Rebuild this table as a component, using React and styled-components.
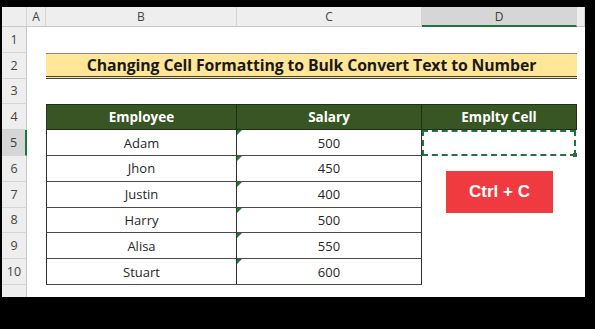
import React from 'react';
import styled, { createGlobalStyle, css } from 'styled-components';

const GlobalStyle = createGlobalStyle`
  html, body {
    margin: 0;
    padding: 0;
    background: #000;
  }
  body {
    font-family: 'Open Sans', 'Liberation Sans', sans-serif;
  }
`;

const Frame = styled.div`
  width: 595px;
  height: 329px;
  background: #000;
  padding: 7px 0 0 2px;
  box-sizing: border-box;
`;

const Sheet = styled.div`
  position: relative;
  width: 583px;
  height: 290px;
  overflow: hidden;
  background: #fff;
  display: grid;
  grid-template-columns: 25px 19px 191px 185px 155px 1fr;
  grid-template-rows: 20px repeat(11, 25.8px);
`;

const ColHead = styled.div`
  display: flex;
  align-items: center;
  justify-content: center;
  box-sizing: border-box;
  background: #eeeeee;
  border-right: 1px solid #d4d4d4;
  border-bottom: 1px solid #c8c8c8;
  font-size: 12px;
  color: #444;
  ${p => p.selected && css`
    background: #d6d6d6;
    border-bottom: 2px solid #217346;
    color: #3a3a3a;
  `}
`;

const RowHead = styled.div`
  display: flex;
  align-items: center;
  justify-content: center;
  box-sizing: border-box;
  background: #eeeeee;
  border-right: 1px solid #c8c8c8;
  border-bottom: 1px solid #d4d4d4;
  font-size: 12.5px;
  color: #444;
  ${p => p.selected && css`
    background: #d6d6d6;
    border-right: 2px solid #217346;
    color: #3a3a3a;
  `}
`;

const Blank = styled.div`
  background: #fff;
`;

const Title = styled.div`
  grid-column: 3 / 6;
  display: flex;
  align-items: center;
  justify-content: center;
  box-sizing: border-box;
  background: #ffe699;
  border-top: 1px solid #8a8a8a;
  border-bottom: 3px double #3f3f3f;
  font-weight: 700;
  font-size: 15.8px;
  color: #1a1a1a;
  letter-spacing: -0.1px;
`;

const Cell = styled.div`
  position: relative;
  display: flex;
  align-items: center;
  justify-content: center;
  box-sizing: border-box;
  font-size: 13px;
  color: #262626;
  border-right: 1px solid #2e2e2e;
  border-bottom: 1px solid #4a4a4a;
  ${p => p.first && css`border-left: 1px solid #2e2e2e;`}
  ${p => p.head && css`
    background: #375623;
    color: #fff;
    font-weight: 700;
    font-size: 13.5px;
    border-top: 1px solid #1f2f14;
    border-bottom-color: #1f2f14;
    border-right-color: #1f2f14;
  `}
  ${p => p.textNum && css`
    &::before {
      content: '';
      position: absolute;
      left: 0;
      top: 0;
      width: 0;
      height: 0;
      border-top: 5px solid #1e7b34;
      border-right: 5px solid transparent;
    }
  `}
`;

const Copied = styled.div`
  box-sizing: border-box;
  position: relative;
  border: 2px dashed #217346;
  margin: 0 1px 0 0;
  &::after {
    content: '';
    position: absolute;
    right: -3px;
    bottom: -3px;
    width: 4px;
    height: 4px;
    background: #217346;
  }
`;

const KeyBadge = styled.div`
  position: absolute;
  left: 444px;
  top: 164px;
  width: 107px;
  height: 42px;
  background: #ef3b3f;
  color: #fff;
  display: flex;
  align-items: center;
  justify-content: center;
  font-family: 'Liberation Sans', Arial, sans-serif;
  font-weight: 700;
  font-size: 17px;
`;

const rows = [
  ['Adam', '500'],
  ['Jhon', '450'],
  ['Justin', '400'],
  ['Harry', '500'],
  ['Alisa', '550'],
  ['Stuart', '600'],
];

export default function App() {
  return (
    <>
      <GlobalStyle />
      <Frame>
        <Sheet>
          <ColHead />
          <ColHead>A</ColHead>
          <ColHead>B</ColHead>
          <ColHead>C</ColHead>
          <ColHead selected>D</ColHead>
          <ColHead />

          <RowHead>1</RowHead>
          <Blank /><Blank /><Blank /><Blank /><Blank />

          <RowHead>2</RowHead>
          <Blank />
          <Title>Changing Cell Formatting to Bulk Convert Text to Number</Title>
          <Blank />

          <RowHead>3</RowHead>
          <Blank /><Blank /><Blank /><Blank /><Blank />

          <RowHead>4</RowHead>
          <Blank />
          <Cell head first>Employee</Cell>
          <Cell head>Salary</Cell>
          <Cell head>Emplty Cell</Cell>
          <Blank />

          {rows.map(([name, salary], i) => (
            <React.Fragment key={name}>
              <RowHead selected={i === 0}>{i + 5}</RowHead>
              <Blank />
              <Cell first>{name}</Cell>
              <Cell textNum>{salary}</Cell>
              {i === 0 ? <Copied /> : <Blank />}
              <Blank />
            </React.Fragment>
          ))}

          <RowHead />
          <Blank /><Blank /><Blank /><Blank /><Blank />

          <KeyBadge>Ctrl + C</KeyBadge>
        </Sheet>
      </Frame>
    </>
  );
}
